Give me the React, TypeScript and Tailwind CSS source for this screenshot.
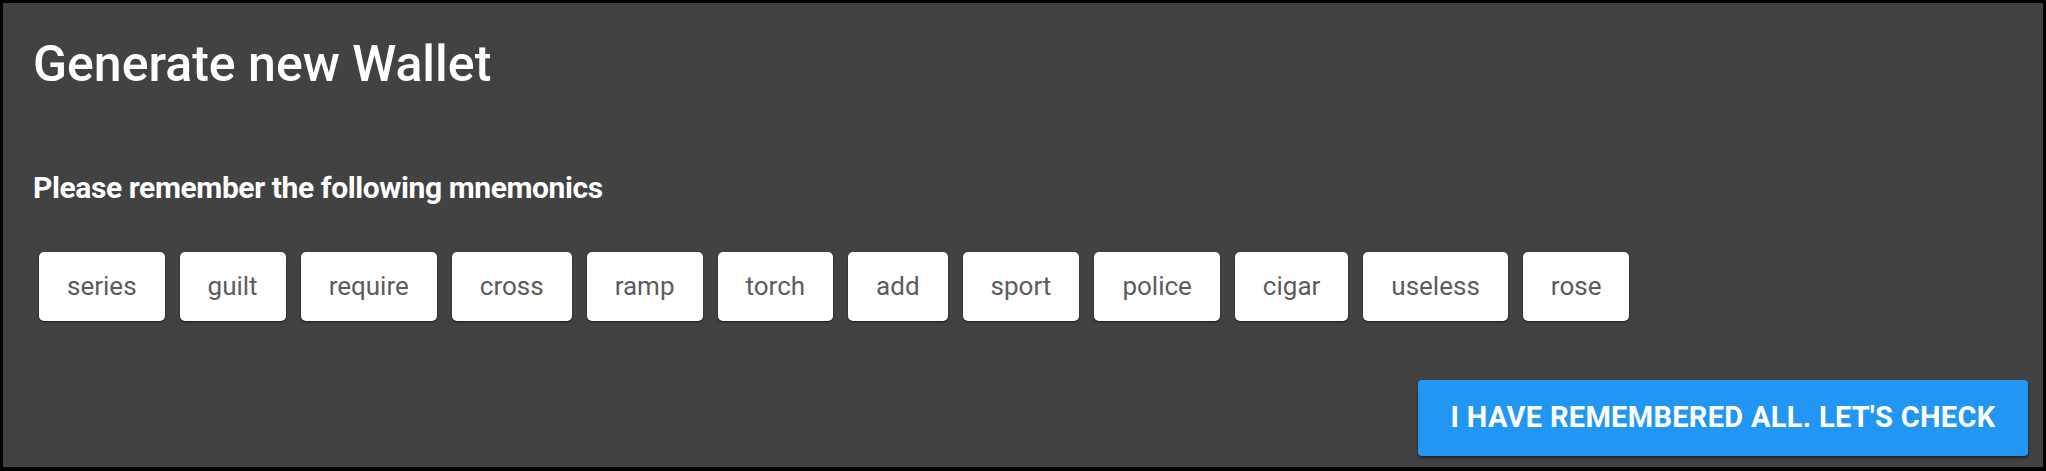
const words = [
  "series",
  "guilt",
  "require",
  "cross",
  "ramp",
  "torch",
  "add",
  "sport",
  "police",
  "cigar",
  "useless",
  "rose",
];

export default function App() {
  return (
    <div
      className="flex h-[471px] w-[2046px] flex-col border-[3px] border-b-4 border-black bg-[#424242] pl-[30px] pr-[15px]"
      style={{ fontFamily: "Roboto, 'Noto Sans', sans-serif" }}
    >
      <h1 className="mt-[37px] text-[50px] leading-[48px] font-medium text-white">
        Generate new Wallet
      </h1>

      <p className="mt-[85px] text-[30px] leading-[30px] font-bold tracking-[-0.4px] text-white">
        Please remember the following mnemonics
      </p>

      <div className="mt-[49px] ml-[6px] flex gap-[15px]">
        {words.map((word) => (
          <span
            key={word}
            className="flex h-[69px] items-center rounded-[5px] bg-white px-[28px] text-[26px] text-[#5c5c5c] shadow-[0_1px_2px_rgba(0,0,0,0.6)]"
          >
            {word}
          </span>
        ))}
      </div>

      <div className="mt-[59px] flex justify-end">
        <button
          type="button"
          className="flex h-[76px] w-[610px] items-center justify-center rounded-[4px] bg-[#2196f3] text-[29px] font-bold tracking-[0.3px] text-white shadow-[0_2px_3px_rgba(0,0,0,0.5)]"
        >
          I HAVE REMEMBERED ALL. LET'S CHECK
        </button>
      </div>
    </div>
  );
}
